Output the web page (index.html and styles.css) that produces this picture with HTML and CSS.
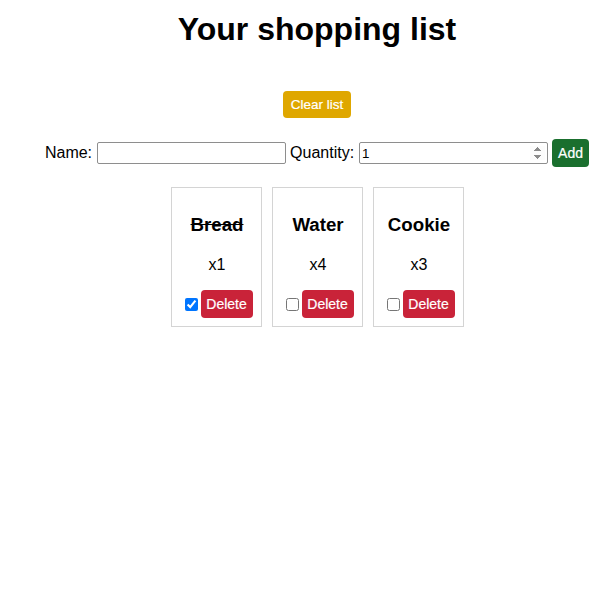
FILE: index.html
```html
<!DOCTYPE html>
<html>
<head>
<meta charset="utf-8">
<link rel="stylesheet" href="styles.css">
</head>
<body>
<div class="app">
  <h1 class="title">Your shopping list</h1>
  <div class="actions">
    <button class="btn btn-clear">Clear list</button>
  </div>
  <form class="add-form" onsubmit="return false">
    <label class="field">Name: <input class="input input-name" type="text"></label>
    <label class="field">Quantity: <input class="input input-qty" type="number" value="1"></label>
    <button class="btn btn-add" type="submit">Add</button>
  </form>
  <div class="cards">
    <div class="card">
      <h3 class="card-name done">Bread</h3>
      <p class="card-qty">x1</p>
      <div class="card-actions"><input type="checkbox" class="check" checked><button class="btn btn-delete">Delete</button></div>
    </div>
    <div class="card">
      <h3 class="card-name">Water</h3>
      <p class="card-qty">x4</p>
      <div class="card-actions"><input type="checkbox" class="check"><button class="btn btn-delete">Delete</button></div>
    </div>
    <div class="card">
      <h3 class="card-name">Cookie</h3>
      <p class="card-qty">x3</p>
      <div class="card-actions"><input type="checkbox" class="check"><button class="btn btn-delete">Delete</button></div>
    </div>
  </div>
</div>
</body>
</html>
```
FILE: styles.css
```css
html, body {
  margin: 0;
  background: #fff;
}
body {
  font-family: "Liberation Sans", Arial, Helvetica, sans-serif;
  color: #000;
  font-size: 16px;
}
.app {
  padding: 11px 8px 8px 32px;
  text-align: center;
}
.title {
  margin: 0;
  font-size: 32px;
  font-weight: bold;
  line-height: 37px;
}
.actions {
  margin-top: 43px;
  display: flex;
  justify-content: center;
}
.btn {
  font-family: "Liberation Sans", Arial, Helvetica, sans-serif;
  border: none;
  color: #fff;
  border-radius: 4px;
  font-size: 14px;
  cursor: pointer;
  -webkit-text-stroke: 0.2px #fff;
}
.btn-clear {
  background: #dfa700;
  height: 27px;
  padding: 0 8px;
  font-size: 13.5px;
}
.add-form {
  margin-top: 21px;
  display: flex;
  justify-content: center;
  align-items: center;
  gap: 4px;
}
.field {
  display: flex;
  align-items: center;
  gap: 5px;
}
.input {
  box-sizing: border-box;
  width: 189px;
  height: 22px;
  border: 1px solid #8e8e8e;
  border-radius: 2px;
  padding: 1px 2px;
  font-family: "Liberation Sans", Arial, Helvetica, sans-serif;
  font-size: 13.3px;
}
.input-qty::-webkit-inner-spin-button {
  opacity: 1;
}
.btn-add {
  background: #1a6f2e;
  height: 28px;
  width: 37px;
  padding: 0;
}
.cards {
  margin-top: 20px;
  display: flex;
  justify-content: center;
  gap: 10px;
}
.card {
  border: 1px solid #d4d4d4;
  padding: 10px 8px 8px 10px;
}
.card-name {
  margin: 16px 0 0;
  font-size: 18.7px;
  line-height: 22px;
}
.card-name.done {
  text-decoration: line-through;
}
.card-qty {
  margin: 20px 0 0;
  line-height: 18px;
}
.card-actions {
  margin-top: 16px;
  display: flex;
  align-items: center;
}
.check {
  width: 13px;
  height: 13px;
  margin: 0 3px 0 3px;
}
.btn-delete {
  background: #c92339;
  height: 28px;
  width: 52px;
  padding: 0;
}
```
